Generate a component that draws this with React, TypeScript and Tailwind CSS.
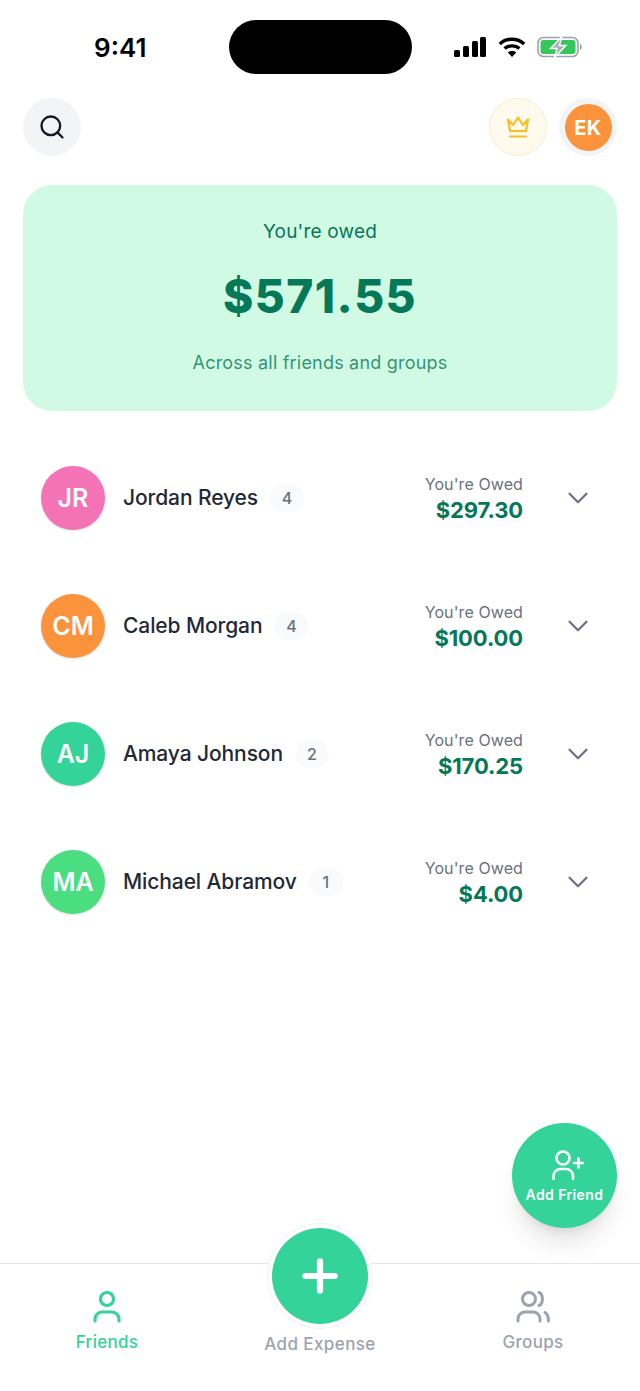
import React from 'react';
import { ChevronDown, Plus, Search } from 'lucide-react';

const friends = [
  { initials: 'JR', name: 'Jordan Reyes', count: 4, amount: '$297.30', color: 'bg-[#f472b6]' },
  { initials: 'CM', name: 'Caleb Morgan', count: 4, amount: '$100.00', color: 'bg-[#fb923c]' },
  { initials: 'AJ', name: 'Amaya Johnson', count: 2, amount: '$170.25', color: 'bg-[#34d399]' },
  { initials: 'MA', name: 'Michael Abramov', count: 1, amount: '$4.00', color: 'bg-[#4ade80]' },
];

const PersonIcon: React.FC = () => (
  <svg width="32" height="34" viewBox="0 0 32 34" fill="none" stroke="#34d399" strokeWidth="3.2" strokeLinecap="round">
    <circle cx="16" cy="9" r="6.5" />
    <path d="M4 31 V29 A7 7 0 0 1 11 22 H21 A7 7 0 0 1 28 29 V31" />
  </svg>
);

const GroupIcon: React.FC = () => (
  <svg width="36" height="34" viewBox="0 0 36 34" fill="none" stroke="#9ca3af" strokeWidth="3" strokeLinecap="round">
    <circle cx="14" cy="9" r="6.5" />
    <path d="M24 2.5 C28.5 4 28.5 14 24 15.5" />
    <path d="M3 31 V29 A7 7 0 0 1 10 22 H18 A7 7 0 0 1 25 29 V31" />
    <path d="M30 22.5 C32.5 24 33.5 27 33.5 31" />
  </svg>
);

const AddFriendIcon: React.FC = () => (
  <svg width="36" height="32" viewBox="0 0 36 32" fill="none" stroke="#fff" strokeWidth="2.6" strokeLinecap="round" className="ml-[3px]">
    <circle cx="15" cy="8" r="6.5" />
    <path d="M5.5 29 V26 A7 7 0 0 1 12.5 19 H18 A7 7 0 0 1 25 26 V29" />
    <path d="M26 13 H35 M30.5 8.5 V17.5" />
  </svg>
);

const StatusBar: React.FC = () => (
  <div className="relative h-[98px] shrink-0">
    <span className="absolute left-[94px] top-[32px] text-[26px] leading-[32px] font-semibold text-black">9:41</span>
    <div className="absolute left-[229px] top-[20px] w-[183px] h-[54px] rounded-full bg-black" />
    <div className="absolute left-[453px] top-[36px] flex items-center gap-[11px]">
      <svg width="34" height="22" viewBox="0 0 34 22" fill="#000">
        <rect x="1" y="14" width="6" height="7" rx="1.5" />
        <rect x="10" y="10" width="6" height="11" rx="1.5" />
        <rect x="19" y="5" width="6" height="16" rx="1.5" />
        <rect x="27" y="1" width="6" height="20" rx="1.5" />
      </svg>
      <svg width="28" height="22" viewBox="0 0 28 22" fill="none" stroke="#000" strokeWidth="3.4">
        <path d="M1.8 8 C8.5 1.6 19.5 1.6 26.2 8" />
        <path d="M6.6 12.6 C10.6 9 17.4 9 21.4 12.6" />
        <path d="M14 21 L9.8 16.4 C12 14.6 16 14.6 18.2 16.4 Z" fill="#000" stroke="none" />
      </svg>
      <svg width="46" height="22" viewBox="0 0 46 22" fill="none">
        <rect x="1" y="1.5" width="40" height="19" rx="5.5" stroke="#9ca3af" strokeWidth="1.6" />
        <rect x="3.5" y="4" width="35" height="14" rx="3" fill="#34c759" />
        <path d="M43 8 C45.5 8.5 45.5 13.5 43 14 Z" fill="#9ca3af" />
        <path d="M25 0.5 L13.5 12.5 H20 L17.5 21.5 L29 9.5 H22.5 Z" fill="#aeb1b8" stroke="#fff" strokeWidth="1.4" />
      </svg>
    </div>
  </div>
);

const Header: React.FC = () => (
  <div className="flex items-center justify-between px-[23px] shrink-0">
    <button className="w-[58px] h-[58px] rounded-full bg-[#f3f4f6] flex items-center justify-center">
      <Search size={28} strokeWidth={2} className="text-[#111827]" />
    </button>
    <div className="flex items-center gap-[12px]">
      <button className="w-[58px] h-[58px] rounded-full bg-[#fff9ee] border border-[#fdecc8] flex items-center justify-center">
        <svg width="26" height="24" viewBox="0 0 26 24" fill="none" stroke="#fbbf24" strokeWidth="2.2" strokeLinejoin="round" strokeLinecap="round">
          <path d="M3 4.5 L8 10 L13 2.5 L18 10 L23 4.5 L21 16 H5 Z" />
          <path d="M5 21.5 H21" />
        </svg>
      </button>
      <div className="w-[58px] h-[58px] rounded-full bg-[#f3f4f6] flex items-center justify-center">
        <div className="w-[47px] h-[47px] pt-[1px] rounded-full bg-[#fb923c] flex items-center justify-center text-white text-[20px] font-bold tracking-[0.5px]">
          EK
        </div>
      </div>
    </div>
  </div>
);

const BalanceCard: React.FC = () => (
  <div className="mx-[23px] mt-[29px] h-[226px] rounded-[29px] bg-[#d1fae5] flex flex-col items-center shrink-0">
    <span className="mt-[34px] text-[19px] leading-[26px] tracking-[0.2px] text-[#047857]">You're owed</span>
    <span className="mt-[23px] text-[46px] leading-[56px] font-extrabold text-[#047857] tracking-[1.5px]">$571.55</span>
    <span className="mt-[26px] text-[18px] leading-[26px] tracking-[0.2px] text-[#047857]/80">Across all friends and groups</span>
  </div>
);

const FriendRow: React.FC<(typeof friends)[number]> = ({ initials, name, count, amount, color }) => (
  <div className="h-[128px] pl-[41px] pr-[45px] flex items-center">
    <div className={`w-[64px] h-[64px] pt-[2px] rounded-full ${color} shadow-sm flex items-center justify-center text-white text-[25px] font-semibold`}>
      {initials}
    </div>
    <span className="ml-[18px] text-[21px] leading-[28px] font-medium text-[#1f2937] tracking-[-0.1px]">{name}</span>
    <span className="ml-[12px] min-w-[34px] h-[28px] px-[10px] rounded-full bg-[#f9fafb] flex items-center justify-center text-[16px] font-medium text-[#6b7280]">
      {count}
    </span>
    <div className="ml-auto pt-[2px] flex flex-col items-end mr-[38px]">
      <span className="text-[16px] leading-[22px] text-[#6b7280] tracking-[0.1px]">You're Owed</span>
      <span className="text-[22px] leading-[30px] font-bold text-[#047857] -tracking-[0.1px]">{amount}</span>
    </div>
    <ChevronDown size={34} strokeWidth={1.6} className="text-[#6b7280] shrink-0" />
  </div>
);

const BottomNav: React.FC = () => (
  <div className="absolute left-0 right-0 top-[1263px] bottom-0 border-t border-[#e5e7eb] bg-white">
    <div className="flex justify-between px-[75px] pt-[26px]">
      <div className="flex flex-col items-center w-[64px]">
        <PersonIcon />
        <span className="mt-[6px] text-[17px] leading-[24px] font-medium tracking-[0.3px] text-[#34d399]">Friends</span>
      </div>
      <div className="flex flex-col items-center w-[64px]">
        <GroupIcon />
        <span className="mt-[6px] text-[17px] leading-[24px] font-medium tracking-[0.3px] text-[#9ca3af]">Groups</span>
      </div>
    </div>
  </div>
);

const App: React.FC = () => {
  return (
    <div
      className="relative w-[640px] h-[1391px] bg-white overflow-hidden flex flex-col"
      style={{ fontFamily: 'Inter, sans-serif' }}
    >
      <StatusBar />
      <Header />
      <BalanceCard />
      <div className="mt-[23px] flex flex-col">
        {friends.map((f) => (
          <FriendRow key={f.name} {...f} />
        ))}
      </div>

      <button className="absolute left-[512px] top-[1123px] z-10 w-[105px] h-[105px] pt-[27px] rounded-full bg-[#34d399] shadow-xl flex flex-col items-center justify-start text-white">
        <AddFriendIcon />
        <span className="mt-[3px] text-[14px] leading-[20px] font-semibold tracking-[0.4px]">Add Friend</span>
      </button>

      <BottomNav />

      <div className="absolute left-[265px] top-[1223px] z-10 w-[110px] flex flex-col items-center">
        <div className="w-[106px] h-[106px] rounded-full bg-white border border-[#eef2f1] flex items-center justify-center">
          <div className="w-[96px] h-[96px] rounded-full bg-[#34d399] flex items-center justify-center">
            <Plus size={50} strokeWidth={3} className="text-white" />
          </div>
        </div>
        <span className="mt-[3px] whitespace-nowrap text-[17px] leading-[24px] font-medium tracking-[0.4px] text-[#9ca3af]">Add Expense</span>
      </div>
    </div>
  );
};

export default App;
